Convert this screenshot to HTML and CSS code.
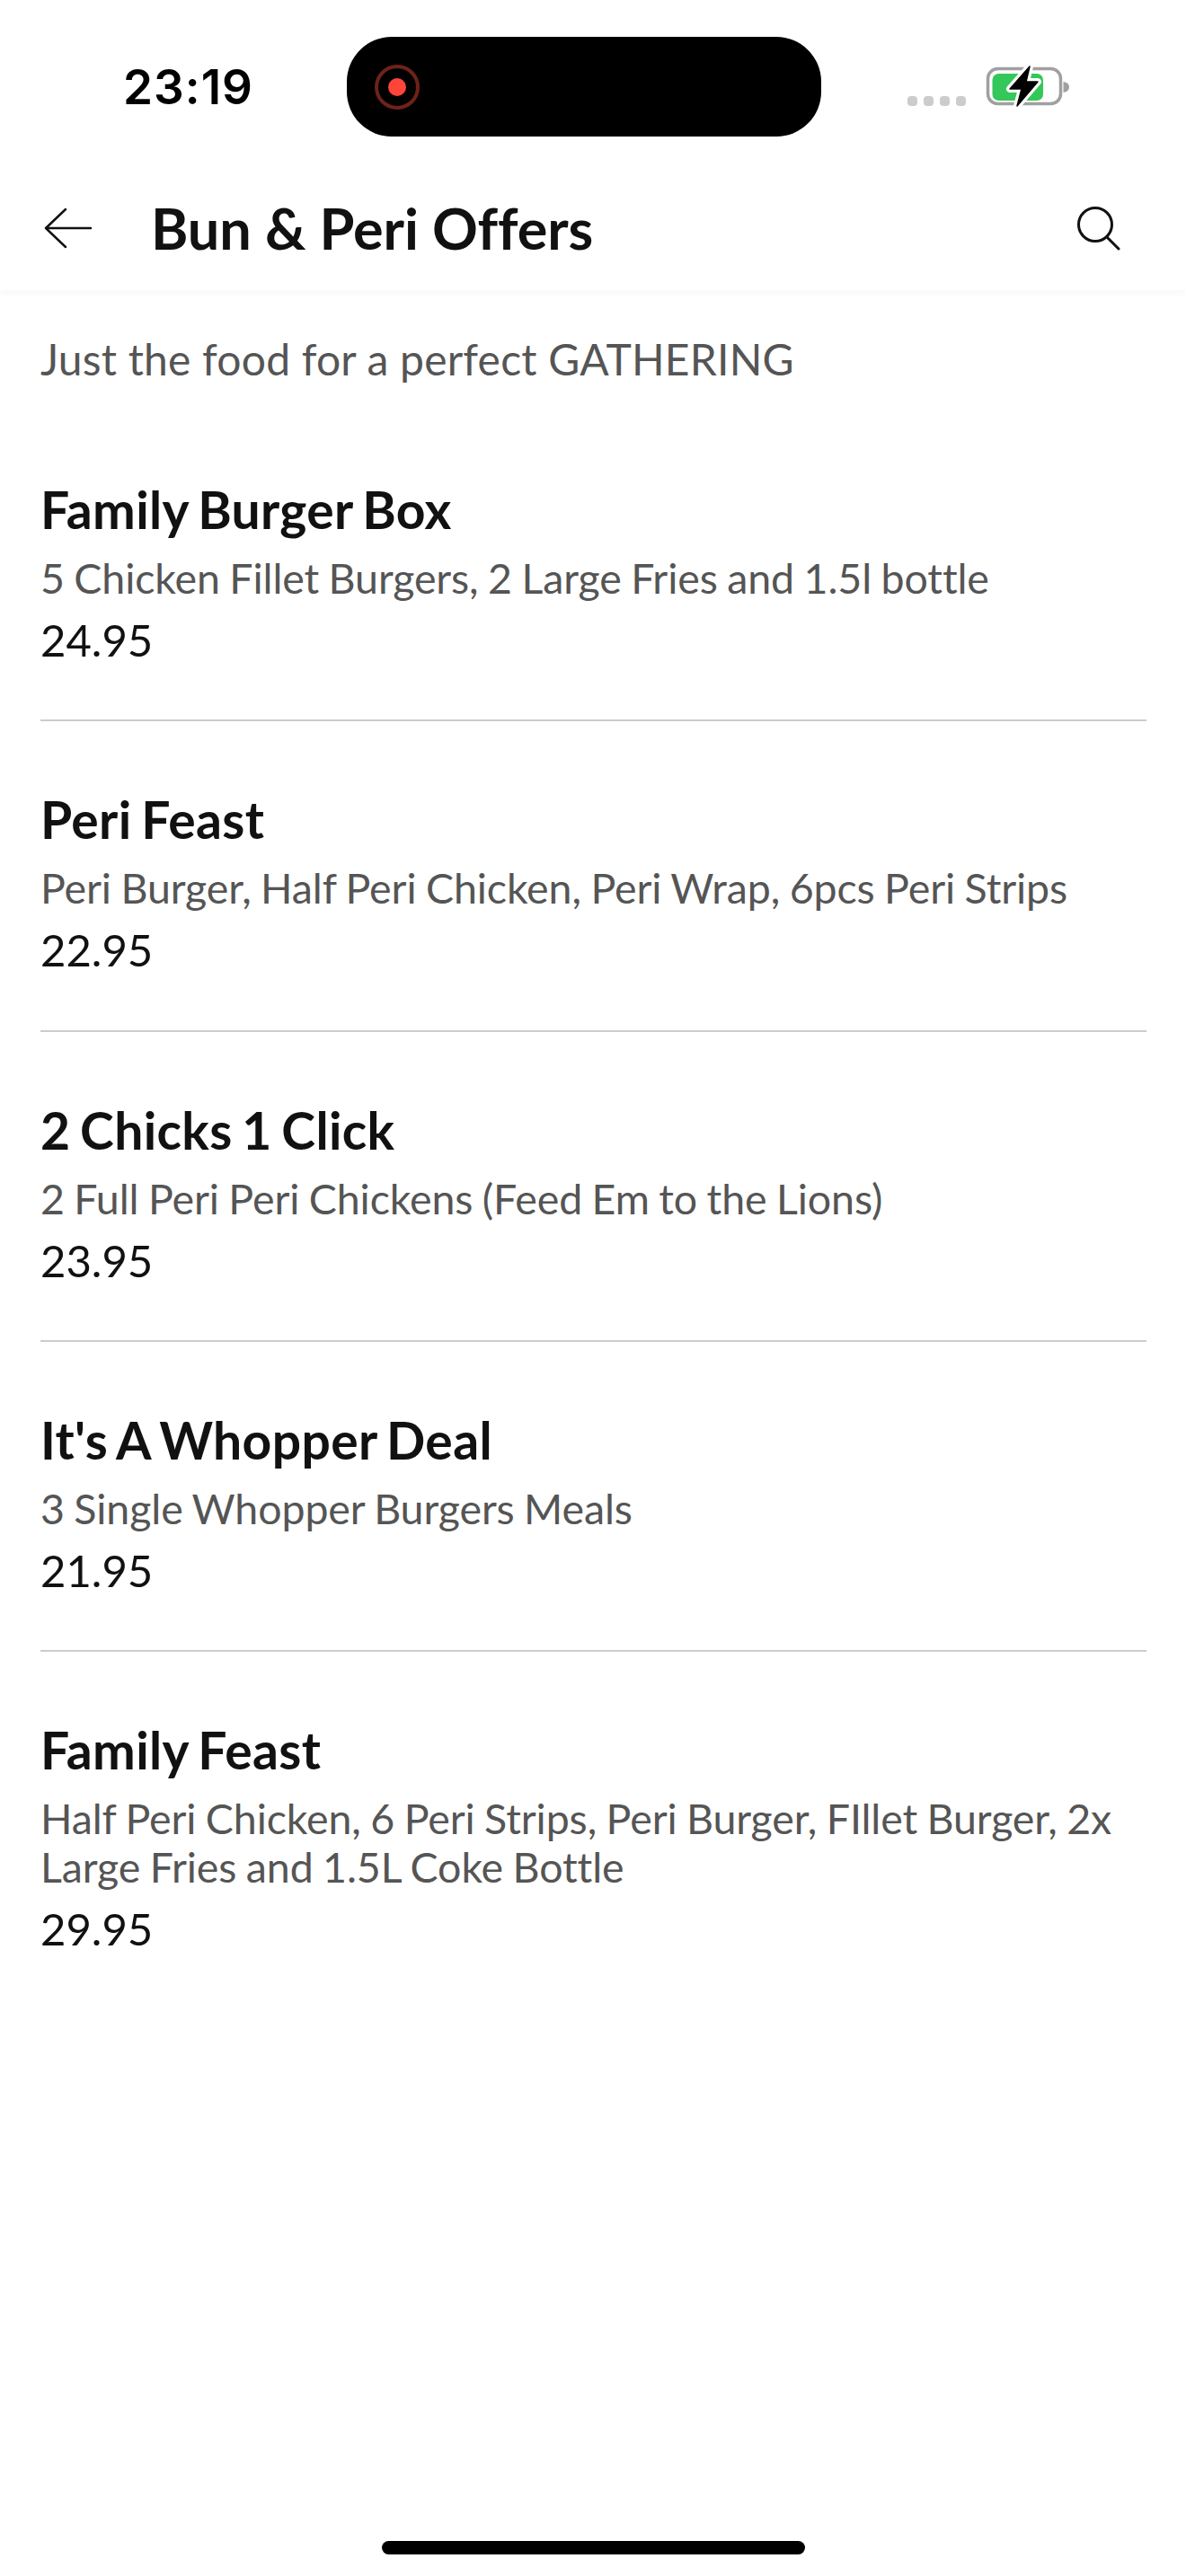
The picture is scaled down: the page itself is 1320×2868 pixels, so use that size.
FILE: index.html
```html
<!DOCTYPE html>
<html lang="en">
<head>
    <meta charset="UTF-8">
    <meta name="viewport" content="width=device-width, initial-scale=1.0">
    <title>Bun &amp; Peri Offers</title>
    <link rel="stylesheet" href="styles.css">
</head>
<body>
    <div class="status-bar">
        <div class="status-time">23:19</div>
        <div class="island">
            <span class="record"><span class="record-dot"></span></span>
        </div>
        <div class="status-right">
            <div class="signal">
                <span></span><span></span><span></span><span></span>
            </div>
            <svg class="battery" width="97" height="48" viewBox="0 0 97 48">
                <rect x="4.5" y="4.5" width="81" height="39" rx="11" fill="none" stroke="#a0a0a0" stroke-width="3.5"/>
                <rect x="9.5" y="10" width="56.5" height="30" rx="7" fill="#34c759"/>
                <path d="M88.5 19 Q95 20 95 25 Q95 30 88.5 31 Z" fill="#a0a0a0"/>
                <path d="M51 2 L29 27 L42 27 L37 46 L60 19 L47 19 Z" fill="#000" stroke="#fff" stroke-width="8" stroke-linejoin="round" paint-order="stroke"/>
                <path d="M51 2 L29 27 L42 27 L37 46 L60 19 L47 19 Z" fill="#000" stroke="#000" stroke-width="1.5" stroke-linejoin="round"/>
            </svg>
        </div>
    </div>

    <header class="top-nav">
        <svg class="back-icon" width="54" height="46" viewBox="0 0 54 46">
            <path d="M24 2 L2 23 L24 44 M2 23 L52 23" fill="none" stroke="#111" stroke-width="2.5" stroke-linecap="round" stroke-linejoin="round"/>
        </svg>
        <h1 class="page-title">Bun &amp; Peri Offers</h1>
        <svg class="search-icon" width="48" height="50" viewBox="0 0 48 50">
            <circle cx="20" cy="21" r="18.5" fill="none" stroke="#111" stroke-width="3"/>
            <path d="M33 35 L46 48" fill="none" stroke="#111" stroke-width="3" stroke-linecap="round"/>
        </svg>
    </header>

    <main class="content">
        <p class="intro">Just the food for a perfect GATHERING</p>

        <div class="offer">
            <h2 class="offer-name">Family Burger Box</h2>
            <p class="offer-desc">5 Chicken Fillet Burgers, 2 Large Fries and 1.5l bottle</p>
            <p class="offer-price">24.95</p>
        </div>
        <div class="offer">
            <h2 class="offer-name">Peri Feast</h2>
            <p class="offer-desc">Peri Burger, Half Peri Chicken, Peri Wrap, 6pcs Peri Strips</p>
            <p class="offer-price">22.95</p>
        </div>
        <div class="offer">
            <h2 class="offer-name">2 Chicks 1 Click</h2>
            <p class="offer-desc">2 Full Peri Peri Chickens (Feed Em to the Lions)</p>
            <p class="offer-price">23.95</p>
        </div>
        <div class="offer">
            <h2 class="offer-name">It's A Whopper Deal</h2>
            <p class="offer-desc">3 Single Whopper Burgers Meals</p>
            <p class="offer-price">21.95</p>
        </div>
        <div class="offer">
            <h2 class="offer-name">Family Feast</h2>
            <p class="offer-desc">Half Peri Chicken, 6 Peri Strips, Peri Burger, FIllet Burger, 2x Large Fries and 1.5L Coke Bottle</p>
            <p class="offer-price">29.95</p>
        </div>
    </main>

    <div class="home-indicator"></div>
</body>
</html>
```

FILE: styles.css
```css
body {
    margin: 0;
    width: 1320px;
    height: 2868px;
    position: relative;
    overflow: hidden;
    background-color: #fff;
    font-family: 'Lato', sans-serif;
    color: #111;
}

h1, h2, p {
    margin: 0;
}

.status-bar {
    display: flex;
    box-sizing: border-box;
    height: 184px;
    padding-top: 41px;
}

.status-time {
    box-sizing: border-box;
    width: 386px;
    height: 111px;
    padding-left: 137px;
    font-family: 'Inter', sans-serif;
    font-size: 53px;
    font-weight: 600;
    line-height: 113px;
    letter-spacing: 1px;
    color: #000;
}

.island {
    display: flex;
    align-items: center;
    box-sizing: border-box;
    width: 528px;
    height: 111px;
    padding-left: 31px;
    background-color: #000;
    border-radius: 50px;
}

.record {
    display: flex;
    align-items: center;
    justify-content: center;
    box-sizing: border-box;
    width: 50px;
    height: 50px;
    border: 4px solid #6e2219;
    border-radius: 50%;
}

.record-dot {
    width: 20px;
    height: 20px;
    background-color: #ff453a;
    border-radius: 50%;
}

.status-right {
    display: flex;
    align-items: flex-end;
    height: 79px;
    margin-left: 96px;
}

.signal {
    display: flex;
    gap: 7px;
    padding-bottom: 2px;
}

.signal span {
    width: 11px;
    height: 11px;
    background-color: #ccc;
    border-radius: 4px;
}

.battery {
    margin-left: 20px;
}

.top-nav {
    display: flex;
    align-items: center;
    box-sizing: border-box;
    height: 139px;
    padding-left: 49px;
    box-shadow: 0 5px 6px rgba(0, 0, 0, 0.025);
}

.page-title {
    margin-left: 65px;
    font-size: 63px;
    font-weight: 700;
    line-height: 76px;
    letter-spacing: -0.1px;
    color: #111;
}

.search-icon {
    margin-left: auto;
    margin-right: 73px;
}

.content {
    padding: 50px 44px 0 45px;
}

.intro {
    font-size: 48px;
    line-height: 54px;
    letter-spacing: 0.2px;
    color: #555;
}

.offer {
    padding: 77px 0 62.3px;
    border-bottom: 2px solid #ccc;
}

.intro + .offer {
    padding-top: 108px;
}

.offer:last-child {
    border-bottom: none;
}

.offer-name {
    font-size: 57px;
    font-weight: 700;
    line-height: 64px;
    letter-spacing: 0.35px;
    word-spacing: -3.5px;
    margin-bottom: 17px;
    color: #111;
}

.offer-desc {
    font-size: 46.5px;
    line-height: 54px;
    letter-spacing: -0.1px;
    word-spacing: -1.3px;
    margin-bottom: 15px;
    color: #555;
}

.offer-price {
    font-size: 49px;
    line-height: 54px;
    color: #111;
}

.home-indicator {
    position: absolute;
    left: 425px;
    top: 2829px;
    width: 471px;
    height: 15px;
    background-color: #000;
    border-radius: 8px;
}
```
